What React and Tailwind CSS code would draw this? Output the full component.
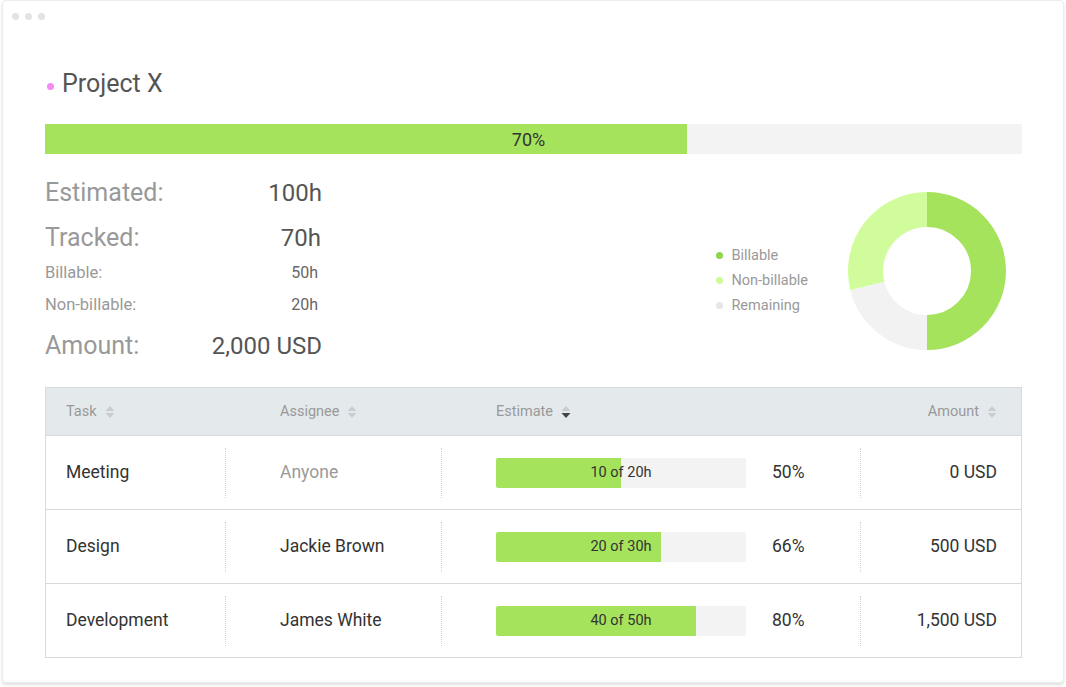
import React from 'react';

const GREEN = 'bg-[#a5e35d]';

// --- Helper Components ---
const SortIcon = ({ active }) => (
  <svg width="10" height="14" viewBox="0 0 10 14" className="ml-[8px]">
    <path d="M5 1 L9.5 6 L0.5 6 Z" fill="#c9cdd1" />
    <path d="M5 13 L9.5 8 L0.5 8 Z" fill={active ? '#444' : '#c9cdd1'} />
  </svg>
);

const Donut = () => {
  const cx = 79, cy = 79, r = 61.5, w = 35;
  const pt = (deg) => {
    const a = ((deg - 90) * Math.PI) / 180;
    return [cx + r * Math.cos(a), cy + r * Math.sin(a)];
  };
  const arc = (from, to) => {
    const [x1, y1] = pt(from);
    const [x2, y2] = pt(to);
    const large = to - from > 180 ? 1 : 0;
    return `M${x1} ${y1} A${r} ${r} 0 ${large} 1 ${x2} ${y2}`;
  };
  return (
    <svg width="158" height="158" viewBox="0 0 158 158">
      <path d={arc(0, 180)} stroke="#a5e35d" strokeWidth={w} fill="none" />
      <path d={arc(180, 256)} stroke="#f2f2f2" strokeWidth={w} fill="none" />
      <path d={arc(256, 360)} stroke="#d1fc9b" strokeWidth={w} fill="none" />
    </svg>
  );
};

const rows = [
  { task: 'Meeting', assignee: 'Anyone', muted: true, done: 10, total: 20, pct: 50, amount: '0 USD', h: 'h-[73px]' },
  { task: 'Design', assignee: 'Jackie Brown', done: 20, total: 30, pct: 66, amount: '500 USD', h: 'h-[74px]' },
  { task: 'Development', assignee: 'James White', done: 40, total: 50, pct: 80, amount: '1,500 USD', h: 'h-[74px]' },
];

const App = () => {
  return (
    <div className="w-[1066px] h-[687px] bg-white overflow-hidden" style={{ fontFamily: 'Roboto, "Liberation Sans", sans-serif' }}>
      <div className="ml-[2px] w-[1062px] h-[683px] bg-white border border-[#ececec] rounded-[4px] shadow-[0_2px_3px_rgba(0,0,0,0.12)]">
        {/* window dots */}
        <div className="flex gap-[6px] pl-[9px] pt-[12px]">
          <span className="w-[7px] h-[7px] rounded-full bg-[#e3e3e3]" />
          <span className="w-[7px] h-[7px] rounded-full bg-[#e3e3e3]" />
          <span className="w-[7px] h-[7px] rounded-full bg-[#e3e3e3]" />
        </div>

        <div className="pl-[42px] pr-[41px]">
          <div className="flex items-center mt-[49px] h-[30px]">
            <span className="w-[7px] h-[7px] rounded-full bg-[#f28cf2] ml-[2px] mt-[4px]" />
            <h1 className="ml-[8px] text-[25px] leading-[30px] text-[#555]">Project X</h1>
          </div>

          {/* overall progress */}
          <div className="relative mt-[25px] h-[30px] bg-[#f3f3f3]">
            <div className={`h-full w-[642px] ${GREEN}`} />
            <div className="absolute inset-0 flex items-center justify-center text-[18px] text-[#333] pr-[10px]">70%</div>
          </div>

          {/* stats */}
          <div className="flex">
            <div className="w-[277px] text-[#999]">
              <div className="flex justify-between items-center h-[30px] mt-[24px] text-[25px]">
                <span>Estimated:</span><span className="text-[#555] text-[24px]">100h</span>
              </div>
              <div className="flex justify-between items-center h-[30px] mt-[15px] text-[25px]">
                <span>Tracked:</span><span className="text-[#555] text-[24px] pr-[1px]">70h</span>
              </div>
              <div className="flex justify-between items-center h-[20px] mt-[10px] text-[16.5px]">
                <span>Billable:</span><span className="text-[#666] text-[16px] pr-[4px]">50h</span>
              </div>
              <div className="flex justify-between items-center h-[20px] mt-[12px] text-[16.5px]">
                <span>Non-billable:</span><span className="text-[#666] text-[16px] pr-[4px]">20h</span>
              </div>
              <div className="flex justify-between items-center h-[30px] mt-[16px] text-[25px]">
                <span>Amount:</span><span className="text-[#555] text-[24px]">2,000 USD</span>
              </div>
            </div>

            <div className="ml-auto flex mr-[16px]">
              <div className="mt-[89px] text-[14.5px] text-[#999]">
                {[
                  ['Billable', 'bg-[#8ed64e]'],
                  ['Non-billable', 'bg-[#cffb98]'],
                  ['Remaining', 'bg-[#e6e6e6]'],
                ].map(([label, dot]) => (
                  <div key={label} className="flex items-center h-[25px]">
                    <span className={`w-[7px] h-[7px] rounded-full ${dot}`} />
                    <span className="ml-[8px]">{label}</span>
                  </div>
                ))}
              </div>
              <div className="ml-[40px] mt-[38px]">
                <Donut />
              </div>
            </div>
          </div>

          {/* table */}
          <div className="mt-[26px] border border-[#d5dbdf]">
            <div className="grid grid-cols-[179px_216px_419px_1fr] h-[48px] bg-[#e4e9ec] border-b border-[#d5dbdf] text-[14.5px] text-[#999] items-center">
              <div className="flex items-center pl-[20px]">Task<SortIcon /></div>
              <div className="flex items-center pl-[55px]">Assignee<SortIcon /></div>
              <div className="flex items-center pl-[55px]">Estimate<SortIcon active /></div>
              <div className="flex items-center justify-end pr-[24px]">Amount<SortIcon /></div>
            </div>
            {rows.map((r, i) => (
              <div key={r.task} className={`grid grid-cols-[179px_216px_419px_1fr] ${r.h} text-[17.5px] text-[#333] items-center ${i > 0 ? 'border-t border-[#d8d8d8]' : ''}`}>
                <div className="pl-[20px]">{r.task}</div>
                <div className={`h-[50px] flex items-center border-l border-dotted border-[#d0d0d0] pl-[54px] ${r.muted ? 'text-[#999]' : ''}`}>{r.assignee}</div>
                <div className="h-[50px] flex items-center border-l border-dotted border-[#d0d0d0] pl-[54px]">
                  <div className="relative w-[250px] h-[30px] bg-[#f3f3f3] rounded-[2px] overflow-hidden">
                    <div className={`h-full ${GREEN}`} style={{ width: `${r.pct}%` }} />
                    <div className="absolute inset-0 flex items-center justify-center text-[14.5px] text-[#333]">
                      {r.done} of {r.total}h
                    </div>
                  </div>
                  <span className="ml-[26px]">{r.pct}%</span>
                </div>
                <div className="h-[50px] flex items-center justify-end border-l border-dotted border-[#d0d0d0] pr-[24px]">{r.amount}</div>
              </div>
            ))}
          </div>
        </div>
      </div>
    </div>
  );
};

export default App;
